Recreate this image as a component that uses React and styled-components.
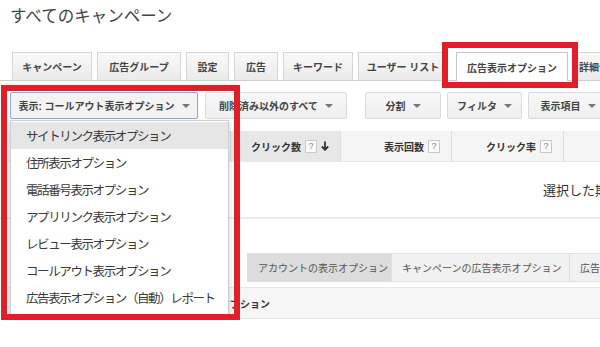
import React from "react";
import styled, { createGlobalStyle } from "styled-components";

const GlobalStyle = createGlobalStyle`
  body {
    margin: 0;
    background: #fff;
    font-family: "Liberation Sans", "Noto Sans CJK JP", sans-serif;
  }
`;

const Page = styled.div`
  position: relative;
  width: 600px;
  height: 347px;
  overflow: hidden;
  background: #fff;
`;

const Title = styled.h1`
  margin: 0;
  height: 46px;
  padding: 6px 0 0 10px;
  font-size: 16.5px;
  line-height: 20px;
  font-weight: normal;
  color: #444;
  white-space: nowrap;
`;

/* main tabs */
const TabStrip = styled.div`
  display: flex;
  align-items: flex-end;
  gap: 5px;
  height: 28px;
  padding-left: 12px;
  border-bottom: 1px solid #cfcfcf;
`;

const Tab = styled.div`
  flex-shrink: 0;
  box-sizing: border-box;
  width: ${({ $w }) => $w}px;
  height: ${({ $active }) => ($active ? 29 : 28)}px;
  margin-bottom: ${({ $active }) => ($active ? -1 : 0)}px;
  margin-left: ${({ $active }) => ($active ? 3 : 0)}px;
  display: flex;
  align-items: center;
  justify-content: center;
  border: 1px solid ${({ $active }) => ($active ? "#c6c6c6" : "#d6d6d6")};
  border-bottom: none;
  background: ${({ $active }) =>
    $active ? "#fff" : "linear-gradient(#f9f9f9, #ebebeb)"};
  font-size: 10px;
  font-weight: bold;
  color: #444;
  white-space: nowrap;
  overflow: hidden;
`;

/* toolbar */
const Toolbar = styled.div`
  display: flex;
  align-items: center;
  height: 27px;
  margin-top: 11px;
  padding-left: 10px;
`;

const Button = styled.div`
  flex-shrink: 0;
  box-sizing: border-box;
  width: ${({ $w }) => $w}px;
  height: 27px;
  margin-right: ${({ $mr }) => $mr ?? 6}px;
  display: flex;
  align-items: center;
  justify-content: center;
  gap: 7px;
  border: 1px solid ${({ $focus }) => ($focus ? "#86a8dc" : "#dadada")};
  border-radius: 2px;
  background: ${({ $focus }) =>
    $focus ? "#f3f3f3" : "linear-gradient(#f8f8f8, #efefef)"};
  font-size: 10px;
  font-weight: bold;
  color: #444;
  white-space: nowrap;
`;

const Caret = styled.span`
  width: 0;
  height: 0;
  border-left: 4px solid transparent;
  border-right: 4px solid transparent;
  border-top: 4px solid #777;
`;

const Separator = styled.div`
  width: 1px;
  height: 24px;
  margin: 0 8px 0 4px;
  background: #e3e3e3;
`;

const DropWrap = styled.div`
  position: relative;
  margin-right: 7px;
`;

const Menu = styled.ul`
  position: absolute;
  top: 28px;
  left: 0;
  z-index: 5;
  width: 219px;
  box-sizing: border-box;
  margin: 0;
  padding: 1px 0 3px;
  list-style: none;
  background: #fff;
  border: 1px solid #cfcfcf;
  box-shadow: 0 2px 4px rgba(0, 0, 0, 0.22);
`;

const MenuItem = styled.li`
  height: 27px;
  display: flex;
  align-items: center;
  padding-left: 15px;
  background: ${({ $hover }) => ($hover ? "#e6e6e6" : "transparent")};
  font-size: 12.5px;
  letter-spacing: -1.4px;
  color: #3a3a3a;
  white-space: nowrap;
`;

/* stats table */
const HeaderRow = styled.div`
  display: grid;
  grid-template-columns: 222px 110px 111px 112px 200px;
  height: 30px;
  margin: 12px 0 0 8px;
  background: #f5f5f5;
  border-bottom: 1px solid #e6e6e6;
`;

const HeadCell = styled.div`
  display: flex;
  align-items: center;
  justify-content: flex-end;
  gap: 4px;
  padding-right: 11px;
  border-left: 1px solid ${({ $first }) => ($first ? "transparent" : "#dedede")};
  background: ${({ $sorted }) => ($sorted ? "#e7e7e7" : "transparent")};
  font-size: 10px;
  font-weight: bold;
  color: #333;
  white-space: nowrap;
`;

const Help = styled.span`
  box-sizing: border-box;
  width: 12px;
  height: 13px;
  display: inline-flex;
  align-items: center;
  justify-content: center;
  border: 1px solid #c9c9c9;
  background: #fafafa;
  font-size: 9px;
  font-weight: normal;
  color: #888;
`;

const EmptyRow = styled.div`
  height: 55px;
  display: flex;
  align-items: center;
  padding-left: 543px;
  border-bottom: 2px solid #ebebeb;
  font-size: 13px;
  color: #333;
  white-space: nowrap;
`;

/* ad extension sub tabs */
const SubTabs = styled.div`
  display: flex;
  height: 29px;
  margin: 34px 0 0 247px;
`;

const SubTab = styled.div`
  flex-shrink: 0;
  box-sizing: border-box;
  width: ${({ $w }) => $w}px;
  display: flex;
  align-items: center;
  padding-left: 10px;
  background: ${({ $active }) => ($active ? "#dcdcdc" : "#f1f1f1")};
  border: 1px solid #e0e0e0;
  border-left: ${({ $first }) => ($first ? "1px solid #e0e0e0" : "none")};
  font-size: 10px;
  color: #555;
  white-space: nowrap;
  overflow: hidden;
`;

const ListHeader = styled.div`
  display: grid;
  grid-template-columns: 262px 1fr;
  height: 30px;
  margin: 5px 0 0 8px;
  background: #f6f6f6;
  border-top: 1px solid #e6e6e6;
  border-bottom: 1px solid #e2e2e2;
`;

const ListHeadCell = styled.div`
  display: flex;
  align-items: center;
  justify-content: flex-end;
  font-size: 10px;
  font-weight: bold;
  color: #333;
  white-space: nowrap;
`;

/* red annotation frames */
const Highlight = styled.div`
  position: absolute;
  z-index: 10;
  box-sizing: border-box;
  border: 6px solid #e41e26;
  pointer-events: none;
`;

const SortArrow = () => (
  <svg width="8" height="10" viewBox="0 0 8 10">
    <path d="M4 0.5v8M0.8 5.5L4 8.8l3.2-3.3" stroke="#333" strokeWidth="1.8" fill="none" />
  </svg>
);

const tabs = [
  ["キャンペーン", 80],
  ["広告グループ", 84],
  ["設定", 43],
  ["広告", 44],
  ["キーワード", 70],
  ["ユーザー リスト", 90],
  ["広告表示オプション", 112, true],
  ["詳細分析", 52],
];

const menuItems = [
  "サイトリンク表示オプション",
  "住所表示オプション",
  "電話番号表示オプション",
  "アプリリンク表示オプション",
  "レビュー表示オプション",
  "コールアウト表示オプション",
  "広告表示オプション（自動）レポート",
];

export default function App() {
  return (
    <Page>
      <GlobalStyle />
      <Title>すべてのキャンペーン</Title>

      <TabStrip>
        {tabs.map(([label, w, active]) => (
          <Tab key={label} $w={w} $active={active}>
            {label}
          </Tab>
        ))}
      </TabStrip>

      <Toolbar>
        <DropWrap>
          <Button $w={188} $mr={0} $focus>
            表示: コールアウト表示オプション <Caret />
          </Button>
          <Menu>
            {menuItems.map((item, i) => (
              <MenuItem key={item} $hover={i === 0}>
                {item}
              </MenuItem>
            ))}
          </Menu>
        </DropWrap>
        <Button $w={142}>
          削除済み以外のすべて <Caret />
        </Button>
        <Separator />
        <Button $w={76}>
          分割 <Caret />
        </Button>
        <Button $w={75}>
          フィルタ <Caret />
        </Button>
        <Button $w={80}>
          表示項目 <Caret />
        </Button>
      </Toolbar>

      <HeaderRow>
        <HeadCell $first />
        <HeadCell $sorted>
          クリック数 <Help>?</Help> <SortArrow />
        </HeadCell>
        <HeadCell>
          表示回数 <Help>?</Help>
        </HeadCell>
        <HeadCell>
          クリック率 <Help>?</Help>
        </HeadCell>
        <HeadCell />
      </HeaderRow>

      <EmptyRow>選択した期間のデータはありません</EmptyRow>

      <SubTabs>
        <SubTab $w={145} $active $first>
          アカウントの表示オプション
        </SubTab>
        <SubTab $w={178}>キャンペーンの広告表示オプション</SubTab>
        <SubTab $w={120}>広告グループの広告表示オプション</SubTab>
      </SubTabs>

      <ListHeader>
        <ListHeadCell>コールアウト オプション</ListHeadCell>
        <ListHeadCell />
      </ListHeader>

      <Highlight style={{ left: 442, top: 42, width: 136, height: 46 }} />
      <Highlight style={{ left: 1, top: 85, width: 239, height: 235 }} />
    </Page>
  );
}
